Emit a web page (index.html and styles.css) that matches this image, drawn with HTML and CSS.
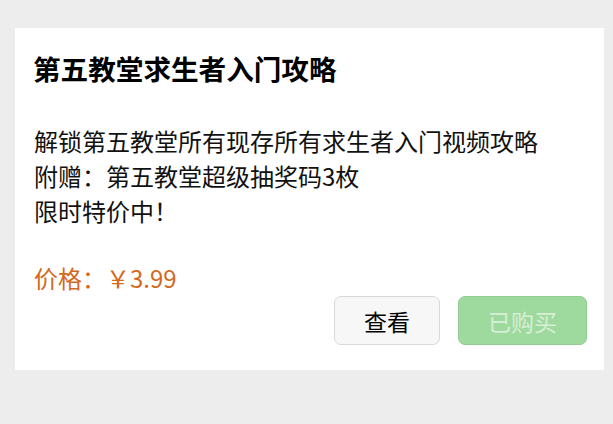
FILE: index.html
```html
<!DOCTYPE html>
<html lang="zh-CN">
<head>
<meta charset="utf-8">
<link rel="stylesheet" href="styles.css">
</head>
<body>
<div class="card">
  <h1 class="title">第五教堂求生者入门攻略</h1>
  <div class="desc">
    <p>解锁第五教堂所有现存所有求生者入门视频攻略</p>
    <p>附赠：第五教堂超级抽奖码3枚</p>
    <p>限时特价中！</p>
  </div>
  <div class="price">价格：￥3.99</div>
  <div class="actions">
    <button class="btn btn-default">查看</button>
    <button class="btn btn-primary" disabled>已购买</button>
  </div>
</div>
</body>
</html>
```
FILE: styles.css
```css
html, body {
  margin: 0;
  padding: 0;
  background: #ededed;
  font-family: "Noto Sans CJK SC", "Noto Sans", sans-serif;
}
body {
  padding: 28px 9px 0 15px;
}
.card {
  background: #fff;
  width: 589px;
  box-sizing: border-box;
  padding: 20px 17px 25px 19px;
}
.title {
  margin: 0 0 0 -1px;
  font-size: 27.6px;
  line-height: 40px;
  font-weight: bold;
  color: #000;
}
.desc {
  margin-top: 35px;
  font-size: 24px;
  line-height: 35px;
  color: #111;
}
.desc p {
  margin: 0;
}
.price {
  margin-top: 32px;
  font-size: 24px;
  line-height: 35px;
  color: #d2691e;
}
.actions {
  display: flex;
  justify-content: flex-end;
  gap: 18px;
  margin-top: 1px;
}
.btn {
  height: 49px;
  padding: 0 29px;
  font-family: inherit;
  font-size: 23px;
  border-radius: 7px;
  box-sizing: border-box;
}
.btn-default {
  background: #f7f7f7;
  border: 1px solid #d9d9d9;
  color: #000;
}
.btn-primary {
  background: #9ed99d;
  border: 1px solid #93cc92;
  color: rgba(255,255,255,0.6);
}
```
